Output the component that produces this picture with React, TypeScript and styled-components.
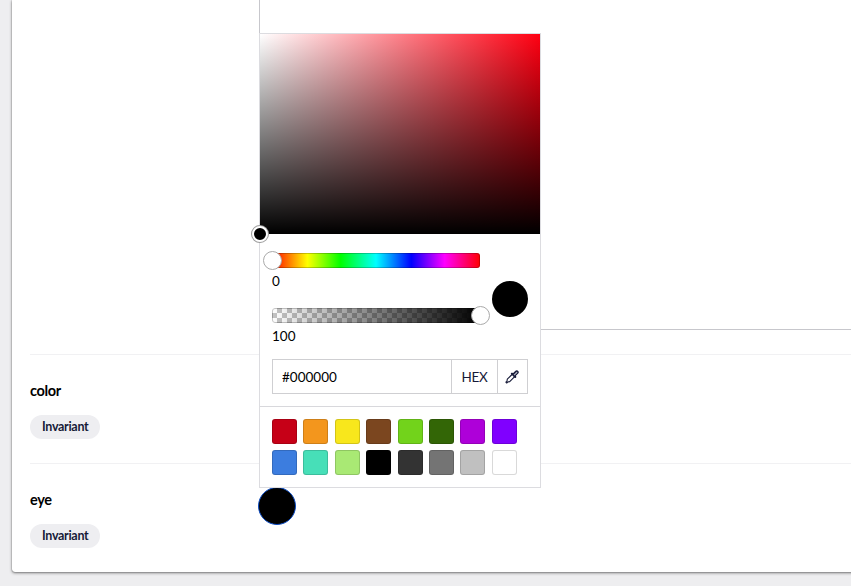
import React from 'react';
import styled, { createGlobalStyle } from 'styled-components';

const Global = createGlobalStyle`
  * { box-sizing: border-box; }
  html, body { margin: 0; height: 100%; overflow: hidden; }
  body { background: #eeeef0; font-family: Lato, 'Liberation Sans', sans-serif; font-size: 14px; color: #000; }
`;

const Page = styled.main`
  height: 586px;
  padding-left: 12px;
  overflow: hidden;
`;

const Card = styled.section`
  height: 572px;
  width: 900px;
  padding-left: 18px;
  background: #fff;
  border-radius: 0 0 0 3px;
  box-shadow: 0 0 1px rgba(0, 0, 0, 0.6), 0 1px 3px rgba(0, 0, 0, 0.5);
`;

const Row = styled.div<{ $height: number; $last?: boolean }>`
  display: grid;
  grid-template-columns: 228px 1fr;
  height: ${p => p.$height}px;
  border-bottom: ${p => (p.$last ? 'none' : '1px solid #f1f1f3')};
`;

const Meta = styled.div`
  display: flex;
  flex-direction: column;
  align-items: flex-start;
  gap: 14px;
  padding-top: 26px;
`;

const Name = styled.span`
  font-size: 14.5px;
  letter-spacing: -0.35px;
  font-weight: 700;
  line-height: 20px;
`;

const Badge = styled.span`
  display: flex;
  align-items: center;
  height: 24px;
  padding: 0 12px 1px;
  border-radius: 12px;
  background: #eeeef1;
  color: #161a38;
  font-size: 12.5px;
  letter-spacing: -0.3px;
  font-weight: 700;
`;

const Editor = styled.div`
  height: 330px;
  margin-left: 1px;
  border-left: 1px solid #c7c7cc;
  border-bottom: 1px solid #c7c7cc;
`;

const ColorField = styled.div`
  position: relative;
  padding-top: 23px;
`;

const Trigger = styled.button`
  display: block;
  width: 38px;
  height: 38px;
  padding: 0;
  border: 1px solid #0b4bc2;
  border-radius: 50%;
  background: #000;
`;

const Popover = styled.div`
  position: absolute;
  left: 1px;
  bottom: 84px;
  width: 282px;
  height: 455px;
  background: #fff;
  border: 1px solid #dcdce0;
`;

const Saturation = styled.div`
  position: relative;
  height: 200px;
  background: linear-gradient(to top, #000, transparent), linear-gradient(to right, #fff, #ff0012);
`;

const Pointer = styled.span`
  position: absolute;
  left: -8px;
  bottom: -8px;
  width: 16px;
  height: 16px;
  border: 2px solid #fff;
  border-radius: 50%;
  background: #000;
  box-shadow: 0 0 0 1px #999;
`;

const Controls = styled.div`
  display: flex;
  align-items: center;
  gap: 12px;
  height: 125px;
  padding: 0 12px;
`;

const Sliders = styled.div`
  width: 208px;
  align-self: flex-start;
  padding-top: 18.5px;
`;

const Slider = styled.div`
  height: 55px;
`;

const Track = styled.div<{ $kind: 'hue' | 'alpha' }>`
  position: relative;
  height: 15px;
  border-radius: 3px;
  box-shadow: inset 0 0 0 1px rgba(0, 0, 0, 0.22);
  background: ${p =>
    p.$kind === 'hue'
      ? 'linear-gradient(to right, #f00, #ff0 17%, #0f0 33%, #0ff 50%, #00f 67%, #f0f 83%, #f00)'
      : 'linear-gradient(to right, transparent, #000), repeating-conic-gradient(#c4c4c4 0 25%, #fff 0 50%) 0 0 / 10px 10px'};
`;

const Thumb = styled.span<{ $end?: boolean }>`
  position: absolute;
  top: -2px;
  ${p => (p.$end ? 'right: -10px' : 'left: -9px')};
  width: 19px;
  height: 19px;
  border-radius: 50%;
  background: #fff;
  border: 1px solid #aaa;
`;

const Value = styled.div`
  padding-top: 5px;
  font-size: 13.5px;
  line-height: 17px;
`;

const Preview = styled.div`
  width: 36px;
  height: 36px;
  margin-top: 5px;
  border-radius: 50%;
  background: #000;
`;

const Entry = styled.div`
  display: flex;
  height: 35px;
  margin: 0 12px;
  border: 1px solid #cfcfd2;
`;

const HexInput = styled.input`
  width: 178px;
  padding: 0 9px;
  border: 0;
  outline: 0;
  background: transparent;
  color: #000;
  font: 13.5px Lato, sans-serif;
`;

const Format = styled.span`
  display: flex;
  align-items: center;
  justify-content: center;
  width: 46px;
  border-left: 1px solid #cfcfd2;
  color: #161a38;
  font-size: 13.5px;
  letter-spacing: -0.3px;
`;

const Picker = styled.button`
  flex: 1;
  display: grid;
  place-items: center;
  padding: 0 1px 0 0;
  border: 0;
  border-left: 1px solid #cfcfd2;
  background: #fff;
`;

const Palette = styled.div`
  display: grid;
  grid-template-columns: repeat(8, 25px);
  column-gap: 6.4px;
  row-gap: 6px;
  margin-top: 12px;
  padding: 12px;
  border-top: 1px solid #d8d8dc;
`;

const Swatch = styled.button<{ $color: string }>`
  height: 25px;
  padding: 0;
  border: 1px solid rgba(0, 0, 0, 0.15);
  border-radius: 3px;
  background: ${p => p.$color};
`;

const colors = [
  '#c60017', '#f3961d', '#f8e71c', '#7b461f', '#72d31b', '#336606', '#ae00d9', '#8000ff',
  '#3c7ddf', '#47dfb8', '#a9e974', '#000000', '#333333', '#747474', '#c0c0c0', '#ffffff',
];

function Dropper() {
  return (
    <svg width="14" height="14" viewBox="0 0 14 14" fill="none" stroke="#161a38" strokeWidth="1.1" strokeLinejoin="round" strokeLinecap="round">
      <path d="M7 4.5 2.3 9.2 2 11 .9 12.2l.8.8 1.2-1.1 1.8-.3 4.7-4.7" />
      <path d="M6.4 3.7 10.2 7.5 10.8 6.9 10 5.9 12.8 3.2Q13.6 2.1 12.8 1.3T10.8 1.2L8.1 4 7 3.1Z" fill="#161a38" />
      <path d="m8.6 4.7 2.7-2.7q.5-.4.9 0t0 .9L9.5 5.6Z" stroke="none" fill="#aeb0bd" />
    </svg>
  );
}

function Label({ name }: { name: string }) {
  return <Meta><Name>{name}</Name><Badge>Invariant</Badge></Meta>;
}

function ColorPopover() {
  return (
    <Popover>
      <Saturation><Pointer /></Saturation>
      <Controls>
        <Sliders>
          <Slider><Track $kind="hue"><Thumb /></Track><Value>0</Value></Slider>
          <Slider><Track $kind="alpha"><Thumb $end /></Track><Value>100</Value></Slider>
        </Sliders>
        <Preview />
      </Controls>
      <Entry>
        <HexInput defaultValue="#000000" aria-label="Hex color" />
        <Format>HEX</Format>
        <Picker aria-label="Pick a color"><Dropper /></Picker>
      </Entry>
      <Palette>{colors.map(c => <Swatch key={c} $color={c} aria-label={c} />)}</Palette>
    </Popover>
  );
}

export default function App() {
  return (
    <Page>
      <Global />
      <Card>
        <Row $height={355}><div /><Editor /></Row>
        <Row $height={109}><Label name="color" /></Row>
        <Row $height={108} $last>
          <Label name="eye" />
          <ColorField><Trigger aria-label="eye color" /><ColorPopover /></ColorField>
        </Row>
      </Card>
    </Page>
  );
}
